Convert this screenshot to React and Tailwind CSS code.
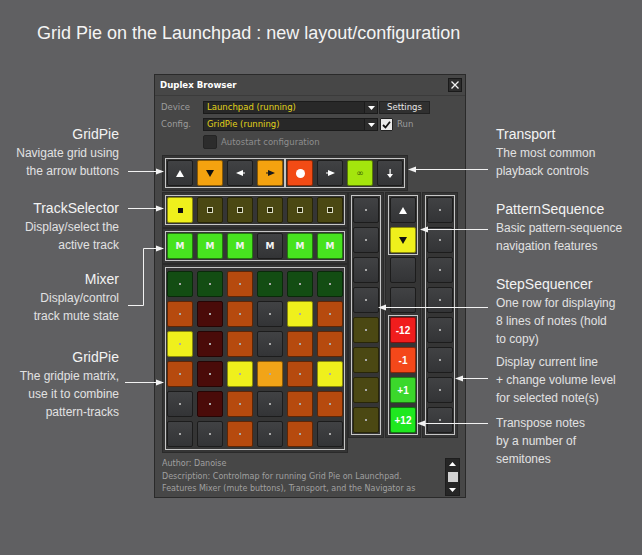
import React from 'react';

const TONES = {
  d: 'bg-linear-to-b from-[#414244] to-[#333436] border-[#1c1c1c]',
  orange: 'bg-[#f4a20f] border-[#8a5a05]',
  rec: 'bg-[#f24b15] border-[#8a2a08]',
  lime: 'bg-[#a4e50d] border-[#5a7d05]',
  y: 'bg-[#eff01c] border-[#8a8a0a]',
  olive: 'bg-[#4b4813] border-[#282608]',
  m: 'bg-[#47e31f] border-[#237a0d]',
  g: 'bg-[#134d13] border-[#0a2a0a]',
  o: 'bg-[#b64a0e] border-[#5e2606]',
  r: 'bg-[#4a0b09] border-[#260504]',
  a: 'bg-[#f1a418] border-[#8a5a08]',
  red: 'bg-[#f01d1d] border-[#8a0c0c]',
  or2: 'bg-[#f4481a] border-[#8a260a]',
  gr: 'bg-[#3bd82b] border-[#1e7a14]',
  gr2: 'bg-[#1fe81f] border-[#0e7a0e]',
};

function Btn({ tone = 'd', children }) {
  return (
    <div className={`w-[26px] h-[26px] shrink-0 rounded-[2px] border flex items-center justify-center ${TONES[tone]}`}>
      {children}
    </div>
  );
}

const Dot = () => <div className="w-[2px] h-[2px] bg-[#a9a9a9]" />;

function Outline({ className = '', children }) {
  return <div className={`border border-[#c6c6c6] p-[1px] ${className}`}>{children}</div>;
}

function Panel({ className = '', children }) {
  return <div className={`bg-[#353535] border border-[#2a2a2a] p-[2px] ${className}`}>{children}</div>;
}

const UpTri = ({ fill = '#ffffff' }) => (
  <svg width="8" height="7" viewBox="0 0 8 7"><polygon points="4,0 8,7 0,7" fill={fill} /></svg>
);
const DownTri = ({ fill = '#111111' }) => (
  <svg width="8" height="7" viewBox="0 0 8 7"><polygon points="0,0 8,0 4,7" fill={fill} /></svg>
);
const LeftArr = ({ fill = '#ffffff' }) => (
  <svg width="9" height="6" viewBox="0 0 9 6"><polygon points="0,3 7,0 7,6" fill={fill} /><rect x="7" y="2.5" width="2" height="1" fill={fill} /></svg>
);
const RightArr = ({ fill = '#ffffff' }) => (
  <svg width="9" height="6" viewBox="0 0 9 6"><rect x="0" y="2.5" width="2" height="1" fill={fill} /><polygon points="9,3 2,0 2,6" fill={fill} /></svg>
);
const DownArrow = () => (
  <svg width="6" height="9" viewBox="0 0 6 9"><rect x="2.5" y="0" width="1.2" height="6" fill="#fff" /><polygon points="0,5 6,5 3,9" fill="#fff" /></svg>
);

const GRID = [
  ['g', 'g', 'o', 'g', 'g', 'g'],
  ['o', 'r', 'o', 'd', 'y', 'o'],
  ['y', 'r', 'o', 'd', 'o', 'o'],
  ['o', 'r', 'y', 'a', 'o', 'y'],
  ['d', 'r', 'o', 'd', 'o', 'o'],
  ['d', 'd', 'o', 'd', 'o', 'd'],
];

function Dropdown({ text }) {
  return (
    <div className="w-[175px] h-[13px] bg-[#282828] border border-[#1b1b1b] flex">
      <div className="flex-1 pl-[3px] text-[#e2d31a] text-[8.5px] leading-[11px] whitespace-nowrap">{text}</div>
      <div className="w-[13px] border-l border-[#1b1b1b] bg-[#2d2d2d] flex items-center justify-center">
        <svg width="7" height="4" viewBox="0 0 7 4"><polygon points="0,0 7,0 3.5,4" fill="#fff" /></svg>
      </div>
    </div>
  );
}

function Window() {
  return (
    <div className="w-[312px] h-[424px] shrink-0 bg-[#474747] border border-[#2a2a2a] overflow-hidden flex flex-col font-['DejaVu_Sans',sans-serif] text-[8px]">
      {/* title bar */}
      <div className="h-[21px] border-b border-[#3b3b3b] flex items-center justify-between pl-[5px] pr-[3px]">
        <span className="text-[8.6px] font-bold text-white">Duplex Browser</span>
        <div className="w-[14px] h-[14px] bg-[#2d2d2d] border border-[#1a1a1a] flex items-center justify-center">
          <svg width="8" height="8" viewBox="0 0 8 8"><path d="M0.5 0.5 L7.5 7.5 M7.5 0.5 L0.5 7.5" stroke="#f0f0f0" strokeWidth="1.3" /></svg>
        </div>
      </div>

      <div className="flex flex-col pl-[7px] pt-[5px]">
        {/* device row */}
        <div className="flex items-center h-[13px]">
          <span className="w-[42px] -ml-[1px] text-[#9c9c9c] text-[8.5px]">Device</span>
          <Dropdown text="Launchpad (running)" />
          <div className="ml-[1px] w-[51px] h-[13px] bg-[#303030] border border-[#222] flex items-center justify-center text-[#e8e8e8] text-[8.5px]">Settings</div>
        </div>
        {/* config row */}
        <div className="flex items-center h-[13px] mt-[4px]">
          <span className="w-[42px] -ml-[1px] text-[#9c9c9c] text-[8.5px]">Config.</span>
          <Dropdown text="GridPie (running)" />
          <div className="ml-[2px] w-[13px] h-[13px] bg-[#e9e9e9] border border-[#222] rounded-[1px] flex items-center justify-center">
            <svg width="9" height="8" viewBox="0 0 9 8"><path d="M1 4 L3.5 6.5 L8 0.8" stroke="#111" strokeWidth="1.8" fill="none" /></svg>
          </div>
          <span className="ml-[4px] text-[#9c9c9c] text-[8.5px]">Run</span>
        </div>
        {/* autostart */}
        <div className="flex items-center h-[14px] mt-[4px] pl-[41px]">
          <div className="w-[14px] h-[14px] bg-[#2c2c2c] border border-[#242424] rounded-[2px]" />
          <span className="ml-[4px] text-[#8e8e8e] text-[8.5px]">Autostart configuration</span>
        </div>

        {/* transport */}
        <Panel className="flex w-[246px] mt-[6px]">
          <Outline className="flex gap-[4px]">
            <Btn><UpTri /></Btn>
            <Btn tone="orange"><DownTri /></Btn>
            <Btn><LeftArr /></Btn>
            <Btn tone="orange"><RightArr fill="#1a1a1a" /></Btn>
          </Outline>
          <Outline className="flex gap-[4px]">
            <Btn tone="rec"><div className="w-[9px] h-[9px] rounded-full bg-white" /></Btn>
            <Btn><RightArr /></Btn>
            <Btn tone="lime"><span className="text-[9px] leading-none text-[#3b5a05]">∞</span></Btn>
            <Btn><DownArrow /></Btn>
          </Outline>
        </Panel>

        {/* lower area */}
        <div className="flex items-start mt-[1px]">
          <div className="flex flex-col">
            <Panel>
              <Outline className="flex gap-[4px]">
                <Btn tone="y"><div className="w-[5px] h-[5px] bg-[#111]" /></Btn>
                {[0, 1, 2, 3, 4].map((i) => (
                  <Btn key={i} tone="olive"><div className="w-[6px] h-[6px] border border-[#dcdcc4] bg-[#2a2806]" /></Btn>
                ))}
              </Outline>
            </Panel>
            <Panel>
              <Outline className="flex gap-[4px]">
                {['m', 'm', 'm', 'd', 'm', 'm'].map((t, i) => (
                  <Btn key={i} tone={t}><span className="text-[9px] font-bold text-[#f4f4f4] leading-none">M</span></Btn>
                ))}
              </Outline>
            </Panel>
            <Panel>
              <div className="border border-[#c6c6c6] px-[1px] pt-[3px] pb-[2px] grid grid-cols-[repeat(6,26px)] gap-[4px]">
                {GRID.flat().map((t, i) => (
                  <Btn key={i} tone={t}><Dot /></Btn>
                ))}
              </div>
            </Panel>
          </div>

          <Panel>
            <Outline className="flex flex-col gap-[4px]">
              {['d', 'd', 'd', 'd', 'olive', 'olive', 'olive', 'olive'].map((t, i) => (
                <Btn key={i} tone={t}><Dot /></Btn>
              ))}
            </Outline>
          </Panel>

          <Panel className="ml-[1px]">
            <div className="flex flex-col">
              <Outline className="flex flex-col gap-[4px]">
                <Btn><UpTri /></Btn>
                <Btn tone="y"><DownTri /></Btn>
              </Outline>
              <div className="border border-transparent p-[1px] flex flex-col gap-[4px]">
                <Btn />
                <Btn />
              </div>
              <Outline className="flex flex-col gap-[4px] font-['Liberation_Sans',Arial,sans-serif] text-[10px] font-bold text-white">
                <Btn tone="red"><span>-12</span></Btn>
                <Btn tone="or2"><span>-1</span></Btn>
                <Btn tone="gr"><span>+1</span></Btn>
                <Btn tone="gr2"><span>+12</span></Btn>
              </Outline>
            </div>
          </Panel>

          <Panel className="ml-[1px]">
            <Outline className="flex flex-col gap-[4px]">
              {[0, 1, 2, 3, 4, 5, 6, 7].map((i) => (
                <Btn key={i}><Dot /></Btn>
              ))}
            </Outline>
          </Panel>
        </div>

        {/* description */}
        <div className="flex mt-[5px] pr-[5px]">
          <div className="flex-1 overflow-hidden text-[#a0a0a0] text-[8px] leading-[12.5px] whitespace-nowrap">
            <div>Author: Danoise</div>
            <div>Description: Controlmap for running Grid Pie on Launchpad.</div>
            <div>Features Mixer (mute buttons), Transport, and the Navigator as</div>
          </div>
          <div className="w-[15px] h-[38px] bg-[#262626] border border-[#1e1e1e] flex flex-col items-center justify-between py-[3px]">
            <svg width="7" height="4" viewBox="0 0 7 4"><polygon points="3.5,0 7,4 0,4" fill="#fff" /></svg>
            <div className="w-[10px] h-[10px] bg-[#d2d2d2]" />
            <svg width="7" height="4" viewBox="0 0 7 4"><polygon points="0,0 7,0 3.5,4" fill="#fff" /></svg>
          </div>
        </div>
      </div>
    </div>
  );
}

function LeftNote({ title, lines, className = '' }) {
  return (
    <div className={className}>
      {title && <div className="text-[14px] leading-[19px] text-[#f3f3f3]">{title}</div>}
      {lines.map((l, i) => (
        <div key={i} className="text-[12px] leading-[18px] text-[#e2e2e2] whitespace-nowrap">{l}</div>
      ))}
    </div>
  );
}

export default function App() {
  return (
    <div className="relative w-[642px] h-[555px] bg-[#606062] overflow-hidden font-['Liberation_Sans',Arial,sans-serif]">
      <div className="pl-[37px] pt-[22px] text-[18px] leading-[22px] text-[#f4f4f4] whitespace-nowrap">
        Grid Pie on the Launchpad : new layout/configuration
      </div>

      <div className="flex items-start mt-[30px]">
        <div className="w-[154px] shrink-0 pr-[35px] pt-[51px] text-right">
          <LeftNote title="GridPie" lines={['Navigate grid using', 'the arrow buttons']} />
          <LeftNote className="mt-[19px]" title="TrackSelector" lines={['Display/select the', 'active track']} />
          <LeftNote className="mt-[16px]" title="Mixer" lines={['Display/control', 'track mute state']} />
          <LeftNote className="mt-[23px]" title="GridPie" lines={['The gridpie matrix,', 'use it to combine', 'pattern-tracks']} />
        </div>

        <Window />

        <div className="pl-[30px] pt-[51px]">
          <LeftNote title="Transport" lines={['The most common', 'playback controls']} />
          <LeftNote className="mt-[20px]" title="PatternSequence" lines={['Basic pattern-sequence', 'navigation features']} />
          <LeftNote className="mt-[20px]" title="StepSequencer" lines={['One row for displaying', '8 lines of notes (hold', 'to copy)']} />
          <LeftNote className="mt-[5px]" lines={['Display current line', '+ change volume level', 'for selected note(s)']} />
          <LeftNote className="mt-[7px]" lines={['Transpose notes', 'by a number of', 'semitones']} />
        </div>
      </div>

      {/* callout arrows drawn over the picture */}
      <svg className="absolute inset-0 pointer-events-none" width="642" height="555" viewBox="0 0 642 555">
        <g stroke="#f2f2f2" strokeWidth="1" fill="none">
          <line x1="128" y1="171.5" x2="157" y2="171.5" />
          <line x1="128" y1="208.5" x2="157" y2="208.5" />
          <polyline points="128,305.5 143.5,305.5 143.5,248.5 157,248.5" />
          <line x1="125" y1="382.5" x2="157" y2="382.5" />
          <line x1="415" y1="169.5" x2="488" y2="169.5" />
          <line x1="427" y1="229.5" x2="488" y2="229.5" />
          <line x1="385" y1="307.5" x2="488" y2="307.5" />
          <line x1="462" y1="378.5" x2="488" y2="378.5" />
          <line x1="424" y1="423.5" x2="488" y2="423.5" />
        </g>
        <g fill="#f2f2f2">
          <polygon points="164,171.5 156,168.5 156,174.5" />
          <polygon points="164,208.5 156,205.5 156,211.5" />
          <polygon points="164,248.5 156,245.5 156,251.5" />
          <polygon points="164,382.5 156,379.5 156,385.5" />
          <polygon points="408,169.5 416,166.5 416,172.5" />
          <polygon points="420,229.5 428,226.5 428,232.5" />
          <polygon points="378,307.5 386,304.5 386,310.5" />
          <polygon points="455,378.5 463,375.5 463,381.5" />
          <polygon points="417,423.5 425,420.5 425,426.5" />
        </g>
      </svg>
    </div>
  );
}
